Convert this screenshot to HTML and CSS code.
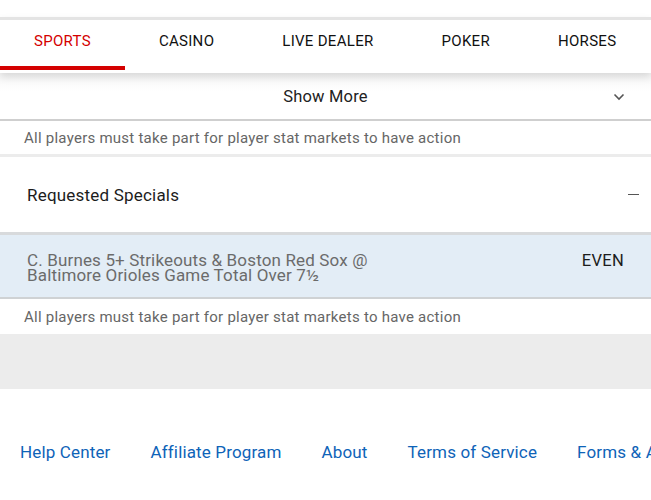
FILE: index.html
```html
<!DOCTYPE html>
<html lang="en">
<head>
    <meta charset="UTF-8">
    <meta name="viewport" content="width=device-width, initial-scale=1.0">
    <title>Sports - Specials</title>
    <link rel="stylesheet" href="styles.css">
</head>
<body>
    <div class="top-space"></div>
    <nav class="tabs">
        <a class="tab active" href="#">SPORTS</a>
        <a class="tab" href="#">CASINO</a>
        <a class="tab" href="#">LIVE DEALER</a>
        <a class="tab" href="#">POKER</a>
        <a class="tab" href="#">HORSES</a>
    </nav>

    <div class="show-more">
        <span>Show More</span>
        <svg class="chevron" width="12" height="8" viewBox="0 0 12 8">
            <path d="M1.5 1.5 L6 6 L10.5 1.5" fill="none" stroke="#555" stroke-width="1.6"/>
        </svg>
    </div>
    <div class="notice">All players must take part for player stat markets to have action</div>

    <div class="section-head">
        <span>Requested Specials</span>
        <span class="minus"></span>
    </div>

    <div class="bet">
        <div class="bet-name">C. Burnes 5+ Strikeouts &amp; Boston Red Sox @<br>Baltimore Orioles Game Total Over 7½</div>
        <div class="bet-odds">EVEN</div>
    </div>
    <div class="notice last">All players must take part for player stat markets to have action</div>

    <div class="grey-block"></div>

    <footer class="links">
        <a href="#">Help Center</a>
        <a href="#">Affiliate Program</a>
        <a href="#">About</a>
        <a href="#">Terms of Service</a>
        <a href="#">Forms &amp; Agreements</a>
    </footer>
</body>
</html>
```

FILE: styles.css
```css
* {
    padding: 0;
    margin: 0;
    box-sizing: border-box;
}

body {
    width: 651px;
    overflow: hidden;
    font-family: Roboto, "Liberation Sans", sans-serif;
    color: #222;
    background: #fff;
}

.top-space {
    height: 17px;
}

.tabs {
    position: relative;
    z-index: 2;
    display: flex;
    height: 56px;
    border-top: 3px solid #e4e4e4;
    background: #fff;
    box-shadow: 0 4px 8px rgba(0, 0, 0, 0.12);
}

.tab {
    display: flex;
    align-items: center;
    padding: 0 34px 4px;
    font-size: 15px;
    letter-spacing: 0.3px;
    color: #111;
    text-decoration: none;
    white-space: nowrap;
    border-bottom: 4px solid transparent;
    margin-bottom: 3px;
}

.tab.active {
    color: #d40000;
    border-bottom-color: #d40000;
}

.show-more {
    position: relative;
    display: flex;
    align-items: center;
    justify-content: center;
    height: 48px;
    padding-top: 1px;
    font-size: 16.5px;
    letter-spacing: 0.2px;
    color: #222;
    border-bottom: 2px solid #cfcfcf;
    background: linear-gradient(#f6f6f6, #fff 40%);
}

.chevron {
    position: absolute;
    right: 26px;
    top: 20px;
}

.notice {
    height: 36px;
    padding: 8px 24px 0;
    font-size: 15px;
    letter-spacing: 0.25px;
    color: #666;
    border-bottom: 3px solid #ececec;
}

.notice.last {
    border-bottom: none;
    height: 35px;
    padding-top: 9px;
}

.section-head {
    display: flex;
    align-items: center;
    justify-content: space-between;
    height: 75px;
    padding: 0 12px 0 27px;
    font-size: 17px;
    letter-spacing: 0.2px;
    color: #1c1c1c;
}

.minus {
    width: 11px;
    height: 1px;
    background: #555;
}

.bet {
    display: flex;
    justify-content: space-between;
    height: 67px;
    padding: 18px 27px 0;
    background: #e3edf6;
    border-top: 3px solid #d8dadc;
    border-bottom: 2px solid #cfd2d4;
}

.bet-name {
    font-size: 17px;
    letter-spacing: 0.15px;
    line-height: 15px;
    color: #6b6b6b;
}

.bet-odds {
    font-size: 16.5px;
    letter-spacing: 0.3px;
    line-height: 15px;
    color: #1c1c1c;
}

.grey-block {
    height: 55px;
    background: #ececec;
}

.links {
    display: flex;
    gap: 40px;
    padding: 53px 0 0 20px;
    white-space: nowrap;
}

.links a {
    font-size: 17px;
    letter-spacing: 0.15px;
    color: #0e63b8;
    text-decoration: none;
}
```
